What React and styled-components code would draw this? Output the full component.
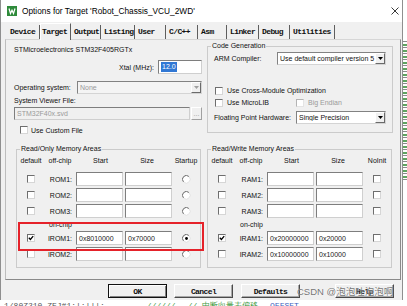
import React from 'react'
import styled, { createGlobalStyle } from 'styled-components'

const GlobalStyle = createGlobalStyle`
  html, body { margin: 0; padding: 0; background: #fff; }
  body {
    font-family: "Liberation Sans", Arial, sans-serif;
    font-size: 7px;
    color: #111;
  }
  * { box-sizing: border-box; }
`

const Screen = styled.div`
  position: relative;
  width: 407px;
  height: 306px;
  overflow: hidden;
  display: grid;
  grid-template-columns: 403px 4px;
  grid-template-rows: 300px 6px;
  background: #fff;
`

const Window = styled.div`
  display: flex;
  flex-direction: column;
  background: #f0f0f0;
  border-left: 1px solid #8f8f8f;
  border-right: 1px solid #8f8f8f;
`

const TitleBar = styled.div`
  flex: none;
  height: 22px;
  display: flex;
  align-items: center;
  padding-left: 6px;
  background: #fff;
`

const Title = styled.span`
  margin-left: 5px;
  font-size: 8.3px;
  color: #000;
  white-space: nowrap;
`

const CloseBox = styled.span`
  margin-left: auto;
  margin-right: 3px;
  display: flex;
`

const TabBar = styled.div`
  flex: none;
  height: 17px;
  display: flex;
  align-items: flex-end;
  padding-left: 6px;
  position: relative;
  z-index: 1;
`

const Tab = styled.div`
  width: ${p => p.$w}px;
  height: ${p => (p.$active ? 17 : 14)}px;
  margin-bottom: ${p => (p.$active ? -1 : 0)}px;
  padding: ${p => (p.$active ? '2px 0 0 1px' : '1px 0 0 3px')};
  border-right: 1px solid #5e5e5e;
  border-left: ${p => (p.$active ? '1px solid #fff' : 'none')};
  border-top: ${p => (p.$active ? '1px solid #fff' : 'none')};
  background: #f0f0f0;
  font-family: "Liberation Mono", "Courier New", monospace;
  font-weight: bold;
  font-size: 8px;
  letter-spacing: -0.6px;
  line-height: 12px;
  white-space: nowrap;
  overflow: hidden;
`

const Panel = styled.div`
  flex: none;
  width: 396px;
  height: 241px;
  margin-left: 4px;
  border: 1px solid;
  border-color: #d6d6d6 #8a8a8a #8a8a8a #bdbdbd;
`

const TopArea = styled.div`
  margin-top: 2px;
  padding-left: 8px;
  display: grid;
  grid-template-columns: 188px 186px;
  column-gap: 5px;
  align-items: start;
`

const LeftCol = styled.div`
  display: flex;
  flex-direction: column;
`

const Line = styled.div`
  margin-top: ${p => p.$mt || 0}px;
  line-height: 8px;
  height: 8px;
  white-space: nowrap;
`

const FieldRow = styled.div`
  display: flex;
  align-items: center;
  justify-content: ${p => p.$justify || 'flex-start'};
  gap: ${p => p.$gap || 0}px;
  height: ${p => p.$h || 13}px;
  margin-top: ${p => p.$mt || 0}px;
  margin-left: ${p => p.$ml || 0}px;
  white-space: nowrap;
`

const SplitRow = styled.div`
  display: grid;
  grid-template-columns: 82px auto;
  align-items: center;
  height: 9px;
  margin-top: ${p => p.$mt || 0}px;
`

const Label = styled.span`
  color: ${p => (p.$disabled ? '#9a9a9a' : '#111')};
  white-space: nowrap;
`

const TextBox = styled.div`
  width: ${p => p.$w}px;
  height: ${p => p.$h || 14}px;
  display: flex;
  align-items: center;
  padding-left: 2px;
  background: ${p => (p.$disabled ? '#f0f0f0' : '#fff')};
  color: ${p => (p.$disabled ? '#9a9a9a' : '#222')};
  border: 1px solid;
  border-color: #7e7e7e #cfcfcf #cfcfcf #7e7e7e;
  white-space: nowrap;
  overflow: hidden;
`

const Selected = styled.span`
  background: #3178d4;
  color: #fff;
  padding: 0 1px;
  line-height: 10px;
`

const SmallButton = styled.div`
  width: 11px;
  height: 13px;
  display: flex;
  align-items: flex-end;
  justify-content: center;
  padding-bottom: 2px;
  color: #9a9a9a;
  border: 1px solid;
  border-color: #fff #a0a0a0 #a0a0a0 #fff;
  line-height: 6px;
`

const Combo = styled.div`
  width: ${p => p.$w}px;
  height: 13px;
  display: flex;
  align-items: center;
  padding-left: 2px;
  background: ${p => (p.$disabled ? '#f4f4f4' : '#fff')};
  color: ${p => (p.$disabled ? '#9a9a9a' : '#111')};
  border: 1px solid;
  border-color: #828282 #d4d4d4 #d4d4d4 #828282;
`

const ComboText = styled.span`
  flex: 1;
  white-space: nowrap;
  overflow: hidden;
`

const ComboArrow = styled.span`
  width: 10px;
  height: 11px;
  display: flex;
  align-items: center;
  justify-content: center;
  background: #f0f0f0;
  border: 1px solid;
  border-color: #fff #6a6a6a #6a6a6a #fff;
`

const Group = styled.fieldset`
  margin: 0;
  padding: 0;
  min-width: 0;
  border: 1px solid #cbcbcb;
`

const Legend = styled.legend`
  margin-left: 3px;
  padding: 0 1px;
  font-size: 7px;
  line-height: 8px;
  color: #111;
`

const GroupBody = styled.div`
  padding: ${p => p.$pad};
`

const BottomArea = styled.div`
  margin-top: 11px;
  padding-left: 10px;
  display: grid;
  grid-template-columns: 185px 185px;
  column-gap: 6px;
`

const MemGrid = styled.div`
  position: relative;
  margin-top: 4px;
  display: grid;
  grid-template-columns: 26px 32px 49px 49px 24px;
  grid-template-rows: 13px repeat(3, 14px) 9px 14px 14px;
  row-gap: 2px;
  align-items: center;
`

const Head = styled.span`
  align-self: start;
  justify-self: center;
  line-height: 8px;
  margin-right: ${p => p.$mr || 0}px;
  white-space: nowrap;
`

const RowLabel = styled.span`
  justify-self: end;
  padding-right: 4px;
  white-space: nowrap;
`

const OnChip = styled.span`
  grid-column: 1 / -1;
  justify-self: start;
  margin-left: 31px;
  line-height: 8px;
`

const Cell = styled.div`
  justify-self: ${p => p.$justify || 'start'};
  display: flex;
`

const Highlight = styled.div`
  position: absolute;
  left: 0;
  top: 65px;
  width: 186px;
  height: 29px;
  border: 2px solid #e5222a;
  pointer-events: none;
`

const Box = styled.span`
  width: 8px;
  height: 8px;
  flex: none;
  display: flex;
  align-items: center;
  justify-content: center;
  background: #fff;
  border: 1px solid;
  border-color: ${p => (p.$disabled ? '#b4b4b4 #e4e4e4 #e4e4e4 #b4b4b4' : '#6e6e6e #d6d6d6 #d6d6d6 #6e6e6e')};
`

const ButtonRow = styled.div`
  flex: none;
  height: 20px;
  display: flex;
  align-items: flex-start;
  padding: 4px 0 0 107px;
`

const DialogButton = styled.div`
  width: 59px;
  height: 14px;
  margin-left: ${p => p.$gap || 0}px;
  display: flex;
  align-items: center;
  justify-content: center;
  border: 1px solid;
  border-color: ${p => (p.$default ? '#111' : '#fff #4a4a4a #4a4a4a #fff')};
  box-shadow: ${p => (p.$default ? 'inset 1px 1px #fff, inset -1px -1px #808080' : 'inset -1px -1px #a8a8a8')};
  font-family: "Liberation Mono", "Courier New", monospace;
  font-weight: bold;
  font-size: 8px;
  letter-spacing: -0.6px;
  color: #111;
`

const Watermark = styled.div`
  position: absolute;
  left: 297px;
  top: 286px;
  z-index: 2;
  font-family: "Liberation Sans", "Noto Sans CJK SC", sans-serif;
  font-size: 9.5px;
  line-height: 12px;
  color: rgba(70, 70, 70, 0.75);
  white-space: nowrap;
  text-shadow: 0 0 1px rgba(255, 255, 255, 0.9);
`

const SideStrip = styled.div`
  grid-column: 2;
  grid-row: 1 / 3;
  background:
    linear-gradient(#fff 0 40px, transparent 40px 180px, #fff 180px),
    repeating-linear-gradient(180deg, #fff 0 2px, #5fa35f 2px 4px, #fff 4px 5px, #8a8a8a 5px 6px);
`

const BottomStrip = styled.div`
  grid-column: 1 / 3;
  grid-row: 2;
  overflow: hidden;
  display: flex;
  gap: 12px;
  padding: 1px 0 0 4px;
  font-family: "Liberation Mono", monospace;
  font-size: 8px;
  line-height: 9px;
  white-space: nowrap;
`

const Code = styled.span`
  color: ${p => p.$c};
  margin-left: ${p => p.$ml || 0}px;
`

const AppIcon = () => (
  <svg width="10" height="10" viewBox="0 0 10 10">
    <rect width="10" height="10" fill="#2f8b3b" />
    <path d="M2 2.5 L3.5 7.5 L5 4.2 L6.5 7.5 L8 2.5" stroke="#fff" strokeWidth="1.2" fill="none" />
  </svg>
)

const CloseIcon = () => (
  <svg width="8" height="8" viewBox="0 0 8 8">
    <path d="M0.5 0.5 L7.5 7.5 M7.5 0.5 L0.5 7.5" stroke="#222" strokeWidth="0.9" />
  </svg>
)

const Arrow = ({ disabled }) => (
  <svg width="5" height="3" viewBox="0 0 5 3">
    <path d="M0 0 H5 L2.5 3 Z" fill={disabled ? '#a0a0a0' : '#000'} />
  </svg>
)

const CheckBox = ({ checked, disabled }) => (
  <Box $disabled={disabled}>
    {checked && (
      <svg width="6" height="6" viewBox="0 0 6 6">
        <path d="M0.8 2.8 L2.4 4.5 L5.2 1.2" stroke="#000" strokeWidth="1.3" fill="none" />
      </svg>
    )}
  </Box>
)

const Radio = ({ on }) => (
  <svg width="9" height="9" viewBox="0 0 9 9">
    <circle cx="4.5" cy="4.5" r="3.6" fill="#fff" />
    <path d="M1.6 7 A3.7 3.7 0 0 1 7 1.6" stroke="#6a6a6a" strokeWidth="1" fill="none" />
    <path d="M7 1.6 A3.7 3.7 0 0 1 1.6 7" stroke="#e2e2e2" strokeWidth="1" fill="none" />
    {on && <circle cx="4.5" cy="4.5" r="1.4" fill="#000" />}
  </svg>
)

const tabs = [
  ['Device', 33], ['Target', 31], ['Output', 30], ['Listing', 34], ['User', 31],
  ['C/C++', 32], ['Asm', 29], ['Linker', 32], ['Debug', 31], ['Utilities', 45],
]

const romRows = [
  { label: 'ROM1:' },
  { label: 'ROM2:' },
  { label: 'ROM3:' },
  null,
  { label: 'IROM1:', start: '0x8010000', size: '0x70000', def: true, on: true },
  { label: 'IROM2:' },
]

const ramRows = [
  { label: 'RAM1:' },
  { label: 'RAM2:' },
  { label: 'RAM3:' },
  null,
  { label: 'IRAM1:', start: '0x20000000', size: '0x20000', def: true },
  { label: 'IRAM2:', start: '0x10000000', size: '0x10000' },
]

const MemoryArea = ({ title, last, rows, radio, marked }) => (
  <Group>
    <Legend>{title}</Legend>
    <GroupBody $pad="0 1px 6px 1px">
      <MemGrid>
        <Head>default</Head>
        <Head>off-chip</Head>
        <Head>Start</Head>
        <Head $mr={5}>Size</Head>
        <Head>{last}</Head>
        {rows.map((r, i) =>
          r === null ? (
            <OnChip key={i}>on-chip</OnChip>
          ) : (
            <React.Fragment key={i}>
              <Cell $justify="center"><CheckBox checked={r.def} /></Cell>
              <RowLabel>{r.label}</RowLabel>
              <TextBox $w={47}>{r.start}</TextBox>
              <TextBox $w={47}>{r.size}</TextBox>
              <Cell $justify="center">{radio ? <Radio on={r.on} /> : <CheckBox />}</Cell>
            </React.Fragment>
          )
        )}
        {marked && <Highlight />}
      </MemGrid>
    </GroupBody>
  </Group>
)

export default function App() {
  return (
    <>
      <GlobalStyle />
      <Screen>
        <Window>
          <TitleBar>
            <AppIcon />
            <Title>Options for Target 'Robot_Chassis_VCU_2WD'</Title>
            <CloseBox><CloseIcon /></CloseBox>
          </TitleBar>

          <TabBar>
            {tabs.map(([name, w]) => (
              <Tab key={name} $w={w} $active={name === 'Target'}>{name}</Tab>
            ))}
          </TabBar>

          <Panel>
            <TopArea>
              <LeftCol>
                <Line $mt={4}>STMicroelectronics STM32F405RGTx</Line>
                <FieldRow $mt={6} $h={14} $justify="flex-end" $gap={4}>
                  <Label>Xtal (MHz):</Label>
                  <TextBox $w={44}><Selected>12.0</Selected></TextBox>
                </FieldRow>
                <FieldRow $mt={6} $h={14} $justify="space-between">
                  <Label>Operating system:</Label>
                  <Combo $w={125} $disabled>
                    <ComboText>None</ComboText>
                    <ComboArrow><Arrow disabled /></ComboArrow>
                  </Combo>
                </FieldRow>
                <Line $mt={3}>System Viewer File:</Line>
                <FieldRow $mt={2} $gap={1}>
                  <TextBox $w={176} $h={13} $disabled>STM32F40x.svd</TextBox>
                  <SmallButton>...</SmallButton>
                </FieldRow>
                <FieldRow $mt={6} $h={8} $ml={6} $gap={3}>
                  <CheckBox />
                  <Label>Use Custom File</Label>
                </FieldRow>
              </LeftCol>

              <Group>
                <Legend>Code Generation</Legend>
                <GroupBody $pad="2px 6px 8px 6px">
                  <FieldRow $justify="space-between">
                    <Label>ARM Compiler:</Label>
                    <Combo $w={109}>
                      <ComboText>Use default compiler version 5</ComboText>
                      <ComboArrow><Arrow /></ComboArrow>
                    </Combo>
                  </FieldRow>
                  <FieldRow $mt={21} $h={9} $ml={1} $gap={4}>
                    <CheckBox />
                    <Label>Use Cross-Module Optimization</Label>
                  </FieldRow>
                  <SplitRow $mt={3}>
                    <FieldRow $h={9} $ml={1} $gap={4}>
                      <CheckBox />
                      <Label>Use MicroLIB</Label>
                    </FieldRow>
                    <FieldRow $h={9} $gap={4}>
                      <CheckBox disabled />
                      <Label $disabled>Big Endian</Label>
                    </FieldRow>
                  </SplitRow>
                  <FieldRow $mt={4} $justify="space-between">
                    <Label>Floating Point Hardware:</Label>
                    <Combo $w={90}>
                      <ComboText>Single Precision</ComboText>
                      <ComboArrow><Arrow /></ComboArrow>
                    </Combo>
                  </FieldRow>
                </GroupBody>
              </Group>
            </TopArea>

            <BottomArea>
              <MemoryArea title="Read/Only Memory Areas" last="Startup" rows={romRows} radio marked />
              <MemoryArea title="Read/Write Memory Areas" last="NoInit" rows={ramRows} />
            </BottomArea>
          </Panel>

          <ButtonRow>
            <DialogButton $default>OK</DialogButton>
            <DialogButton $gap={7}>Cancel</DialogButton>
            <DialogButton $gap={8}>Defaults</DialogButton>
            <DialogButton $gap={35}>Help</DialogButton>
          </ButtonRow>
        </Window>

        <SideStrip />
        <BottomStrip>
          <Code $c="#555">1/80Z210 ZEJ#1:|:|||:</Code>
          <Code $c="#3f9a3f" $ml={30}>//////</Code>
          <Code $c="#3f9a3f">// 中断向量表偏移</Code>
          <Code $c="#3b5fc0">OFFSET</Code>
        </BottomStrip>

        <Watermark>CSDN @泡泡吐泡泡啊</Watermark>
      </Screen>
    </>
  )
}
